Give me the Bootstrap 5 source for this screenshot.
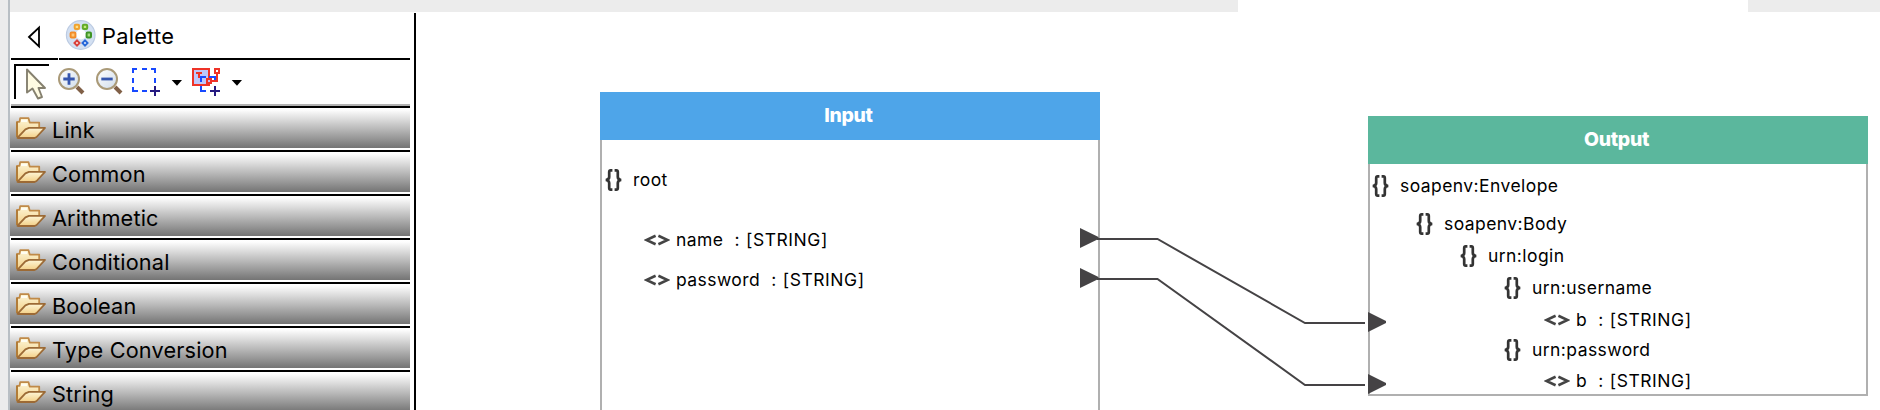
<!DOCTYPE html>
<html lang="en">
<head>
<meta charset="utf-8">
<title>Mapping editor</title>
<link href="https://cdn.jsdelivr.net/npm/bootstrap@5.3.0/dist/css/bootstrap.min.css" rel="stylesheet">
<style>
body{height:410px;font-family:Inter,"Liberation Sans",sans-serif;color:#000;background:#fff;line-height:1}
.topstrip{height:12px;background:#ececec}
.topstrip .gut{width:8px}
.topstrip .edge{width:2px;background:#b9bfc4}
.topstrip .tab-open{width:510px;margin-left:1228px;background:#fff}
.gutter{width:10px;background:#ececec;border-right:2px solid #b9bfc4}
.palette{width:404px}
.palette-inner{width:400px}
.rule-dark{height:2px;background:#000;margin-left:1px}
.pal-head{height:46px}
.pal-title{font-size:21.8px;line-height:48px;letter-spacing:.25px;margin-left:-1px}
.pal-tools{height:44px}
.tool-edge{height:2px;background:#b2b2b2;margin-left:1px}
.drawer{height:40px;padding-left:6px;background:linear-gradient(#fff 0,#fdfdfd 5%,#747474 100%)}
.drawer-gap{height:2px}
.drawer-name{font-size:21.7px;line-height:40px;margin:4px 0 0 6px;letter-spacing:.16px;white-space:nowrap}
.divider{width:2px;background:#000;margin-top:1px}
svg{display:block;flex:none}
.map-node{width:500px}
.node-in{left:184px;top:80px;height:320px}
.node-out{left:952px;top:104px;height:280px}
.node-head{height:48px;color:#fff;font-weight:800;font-size:19.4px;letter-spacing:-.3px;line-height:47px;padding-right:3px}
.head-in{background:#4ea5e9}
.head-out{background:#5bb79d}
.node-body{border:2px solid #b0b0b0;border-top:0}
.field{font-size:17.5px;letter-spacing:.43px;height:32px;line-height:32px;white-space:pre}
.field svg{margin-right:11px}
.field .leaf{margin-right:6px}
.field .typ{margin-left:11px;letter-spacing:.55px;word-spacing:.5px}
.links{left:0;top:0}
</style>
</head>
<body class="d-flex flex-column overflow-hidden">
<svg width="0" height="0" class="position-absolute">
  <defs>
    <linearGradient id="fg" x1="0" y1="0" x2="0" y2="1"><stop offset="0" stop-color="#fdf6d8"/><stop offset="1" stop-color="#f3cf85"/></linearGradient>
    <linearGradient id="lens" x1="0" y1="0" x2="1" y2="1"><stop offset="0" stop-color="#fff"/><stop offset="1" stop-color="#cfdcea"/></linearGradient>
    <symbol id="folder" viewBox="0 0 30 22">
      <path d="M1 20V4.8H3.5L4.2 1.2H12.5L13.7 5.6H23.2V10.8" fill="url(#fg)" stroke="#c08a48" stroke-width="1.8" stroke-linejoin="round"/>
      <path d="M5 3H11V5H5Z" fill="#fffdf2"/>
      <path d="M1 20V5" stroke="#b07a35" stroke-width="1.8"/>
      <path d="M1.4 20.8L9.4 12.4L13 10.9H29L20.6 20L18.6 21H2Z" fill="url(#fg)" stroke="#9c6a35" stroke-width="1.8" stroke-linejoin="round"/>
    </symbol>
    <symbol id="obj" viewBox="0 0 17 22">
      <path d="M7.4 1.4H5.6Q4.2 1.4 4.2 3V8Q4.2 10.6 .8 11Q4.2 11.4 4.2 14V19Q4.2 20.6 5.6 20.6H7.4M9.6 1.4H11.4Q12.8 1.4 12.8 3V8Q12.8 10.6 16.2 11Q12.8 11.4 12.8 14V19Q12.8 20.6 11.4 20.6H9.6" fill="none" stroke="#333" stroke-width="2.7"/>
    </symbol>
    <symbol id="tag" viewBox="0 0 26 12">
      <path d="M11.6 1.8L2.4 6L11.6 10.2M14.4 1.8L23.6 6L14.4 10.2" fill="none" stroke="#444" stroke-width="2.6"/>
    </symbol>
  </defs>
</svg>

<div class="topstrip d-flex flex-shrink-0">
  <div class="gut"></div><div class="edge"></div><div class="tab-open"></div>
</div>

<div class="d-flex flex-grow-1 overflow-hidden">
  <div class="gutter flex-shrink-0"></div>
  <aside class="palette flex-shrink-0">
    <div class="palette-inner">
      <div class="pal-head d-flex">
        <svg width="93" height="46" viewBox="10 12 93 46">
          <path d="M29 37L39 27.6V46.4Z" fill="#fff" stroke="#000" stroke-width="1.8"/>
          <circle cx="80.7" cy="35" r="14.3" fill="#d3e0f2" stroke="#bccbe2" stroke-width="1.2"/>
          <circle cx="81" cy="34.5" r="5" fill="#fff"/>
          <g fill="#fff" stroke-width="2">
            <rect x="74.7" y="24.7" width="4.4" height="4.4" rx="1" stroke="#f0a330" fill="#ffe08a"/>
            <rect x="82.8" y="24.7" width="4.4" height="4.4" rx="1" stroke="#62ab28" fill="#c5ea7d"/>
            <rect x="70.6" y="32.6" width="4.8" height="4.8" rx="1" stroke="#f28c28" fill="#ffc679"/>
            <rect x="86.6" y="32.6" width="4.4" height="4.8" rx="1" stroke="#3f9425" fill="#a6dc83"/>
            <path d="M77 40.4L79.5 43L77 45.6L74.5 43Z" stroke="#d9413a"/>
            <path d="M85 40.4L87.5 43L85 45.6L82.5 43Z" stroke="#2667d8"/>
          </g>
        </svg>
        <span class="pal-title">Palette</span>
      </div>
      <div class="d-flex"><div class="rule-dark" style="width:47px"></div><div class="rule-dark flex-grow-1"></div></div>
      <div class="pal-tools d-flex">
        <svg width="44" height="44" viewBox="10 60 44 44">
          <path d="M15 99V65H49" fill="none" stroke="#000" stroke-width="2"/>
          <path d="M27 69.5V92.5L32.5 88.5L38 98.5L42 97L38.5 88H45Z" fill="#fffbe2" stroke="#85806f" stroke-width="1.9" stroke-linejoin="round"/>
        </svg>
        <svg width="38" height="44" viewBox="54 60 38 44">
          <path d="M77 87L83 93" stroke="#806047" stroke-width="4"/>
          <circle cx="69" cy="79" r="10" fill="url(#lens)" stroke="#aa9a78" stroke-width="2"/>
          <path d="M63.3 79H74.7M69 73.3V84.7" stroke="#3656ad" stroke-width="2.8"/>
        </svg>
        <svg width="38" height="44" viewBox="92 60 38 44">
          <path d="M115 87L121 93" stroke="#806047" stroke-width="4"/>
          <circle cx="107" cy="79" r="10" fill="url(#lens)" stroke="#aa9a78" stroke-width="2"/>
          <path d="M101.3 79H112.7" stroke="#3656ad" stroke-width="2.8"/>
        </svg>
        <svg width="60" height="44" viewBox="130 60 60 44">
          <path d="M133 73V69H137M142 69H147M151 69H155V73M155 78V83M133 78V83M133 87V91H138M142 91H147" fill="none" stroke="#1749ff" stroke-width="2"/>
          <path d="M150 91H160M155 86V96" stroke="#251a80" stroke-width="2"/>
          <path d="M171.7 80H182L177 85.7Z"/>
        </svg>
        <svg width="60" height="44" viewBox="190 60 60 44">
          <rect x="193" y="69" width="16" height="16" fill="#bdc7fb" stroke="#ee3328" stroke-width="2"/>
          <path d="M196 73H202M199 73V78" stroke="#ee3328" stroke-width="2"/>
          <path d="M201 82V77H206M209 77H215V81M201 86V91H206" fill="none" stroke="#1749ff" stroke-width="2"/>
          <path d="M211 81H217V73" fill="none" stroke="#ee3328" stroke-width="2"/>
          <rect x="207" y="79" width="4" height="4" fill="#cbbcf0" stroke="#ee3328" stroke-width="2"/>
          <rect x="215" y="69" width="4" height="4" fill="#fff" stroke="#ee3328" stroke-width="2"/>
          <path d="M210 91H220M215 86V96" stroke="#251a80" stroke-width="2"/>
          <path d="M231.7 80H242L237 85.7Z"/>
        </svg>
      </div>
      <div class="tool-edge"></div>
      <div class="rule-dark"></div>
      <div class="drawer d-flex align-items-center"><svg width="30" height="22"><use href="#folder"/></svg><span class="drawer-name">Link</span></div>
      <div class="drawer-gap"></div><div class="rule-dark"></div>
      <div class="drawer d-flex align-items-center"><svg width="30" height="22"><use href="#folder"/></svg><span class="drawer-name">Common</span></div>
      <div class="drawer-gap"></div><div class="rule-dark"></div>
      <div class="drawer d-flex align-items-center"><svg width="30" height="22"><use href="#folder"/></svg><span class="drawer-name">Arithmetic</span></div>
      <div class="drawer-gap"></div><div class="rule-dark"></div>
      <div class="drawer d-flex align-items-center"><svg width="30" height="22"><use href="#folder"/></svg><span class="drawer-name">Conditional</span></div>
      <div class="drawer-gap"></div><div class="rule-dark"></div>
      <div class="drawer d-flex align-items-center"><svg width="30" height="22"><use href="#folder"/></svg><span class="drawer-name">Boolean</span></div>
      <div class="drawer-gap"></div><div class="rule-dark"></div>
      <div class="drawer d-flex align-items-center"><svg width="30" height="22"><use href="#folder"/></svg><span class="drawer-name">Type Conversion</span></div>
      <div class="drawer-gap"></div><div class="rule-dark"></div>
      <div class="drawer d-flex align-items-center"><svg width="30" height="22"><use href="#folder"/></svg><span class="drawer-name">String</span></div>
    </div>
  </aside>
  <div class="divider flex-shrink-0"></div>

  <main class="position-relative flex-grow-1">
    <section class="map-node node-in position-absolute d-flex flex-column">
      <div class="node-head head-in text-center flex-shrink-0">Input</div>
      <div class="node-body flex-grow-1">
        <div class="field d-flex align-items-center" style="margin-top:24px;padding-left:3px"><svg width="17" height="22"><use href="#obj"/></svg>root</div>
        <div class="field d-flex align-items-center" style="margin-top:28px;padding-left:42px"><svg class="leaf" width="26" height="12"><use href="#tag"/></svg>name<span class="typ">: [STRING]</span></div>
        <div class="field d-flex align-items-center" style="margin-top:8px;padding-left:42px"><svg class="leaf" width="26" height="12"><use href="#tag"/></svg>password<span class="typ">: [STRING]</span></div>
      </div>
    </section>
    <section class="map-node node-out position-absolute d-flex flex-column">
      <div class="node-head head-out text-center flex-shrink-0">Output</div>
      <div class="node-body flex-grow-1">
        <div class="field d-flex align-items-center" style="margin-top:6px;padding-left:2px"><svg width="17" height="22"><use href="#obj"/></svg>soapenv:Envelope</div>
        <div class="field d-flex align-items-center" style="margin-top:6px;padding-left:46px"><svg width="17" height="22"><use href="#obj"/></svg>soapenv:Body</div>
        <div class="field d-flex align-items-center" style="padding-left:90px"><svg width="17" height="22"><use href="#obj"/></svg>urn:login</div>
        <div class="field d-flex align-items-center" style="padding-left:134px"><svg width="17" height="22"><use href="#obj"/></svg>urn:username</div>
        <div class="field d-flex align-items-center" style="height:31px;padding-left:174px"><svg class="leaf" width="26" height="12"><use href="#tag"/></svg>b<span class="typ">: [STRING]</span></div>
        <div class="field d-flex align-items-center" style="height:30px;padding-left:134px"><svg width="17" height="22"><use href="#obj"/></svg>urn:password</div>
        <div class="field d-flex align-items-center" style="height:32px;margin-bottom:-3px;padding-left:174px"><svg class="leaf" width="26" height="12"><use href="#tag"/></svg>b<span class="typ">: [STRING]</span></div>
      </div>
    </section>
    <svg class="links position-absolute" width="1464" height="398" viewBox="416 12 1464 398">
      <g fill="none" stroke="#454345" stroke-width="2">
        <path d="M1097 239H1157.5L1305 323H1365"/>
        <path d="M1097 279H1157.5L1305 385H1365"/>
      </g>
      <g fill="#454345">
        <path d="M1080 228L1098.5 237V239L1080 248Z"/>
        <path d="M1080 268L1098.5 277V279L1080 288Z"/>
        <path d="M1368 312L1386 321V323L1368 332Z"/>
        <path d="M1368 374L1386 383V385L1368 394Z"/>
      </g>
    </svg>
  </main>
</div>
<script src="https://cdn.jsdelivr.net/npm/bootstrap@5.3.0/dist/js/bootstrap.bundle.min.js"></script>
</body>
</html>
